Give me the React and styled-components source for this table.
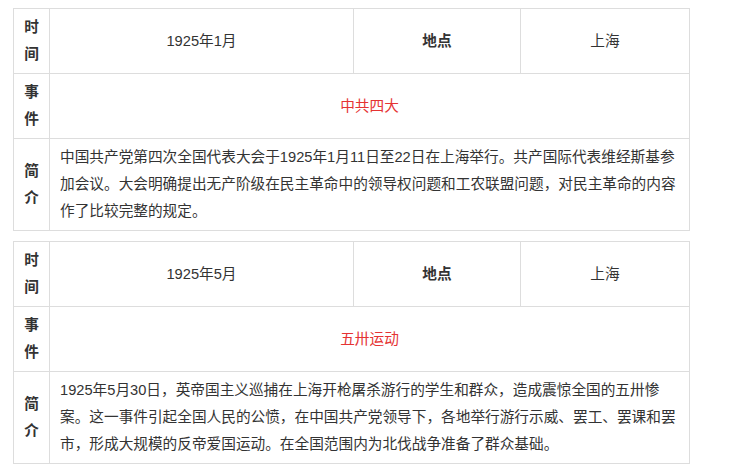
import styled, { createGlobalStyle } from 'styled-components';

const GlobalStyle = createGlobalStyle`
  body {
    margin: 0;
    background: #ffffff;
  }
`;

const Page = styled.div`
  padding: 8px 13px;
  font-family: "Liberation Sans", "Noto Sans CJK SC", sans-serif;
  font-size: 14.67px;
  color: #333333;
`;

const EventTable = styled.table`
  width: 677px;
  table-layout: fixed;
  border-collapse: collapse;
  margin-bottom: 10px;
`;

const Cell = styled.td`
  border: 1px solid #dddddd;
  padding: 5px 10px;
  line-height: 27px;
  vertical-align: middle;
  text-align: ${(p) => (p.$left ? 'left' : 'center')};
  font-weight: ${(p) => (p.$bold ? 'bold' : 'normal')};
  color: ${(p) => (p.$red ? '#e53333' : '#333333')};
  word-break: normal;
`;

const events = [
  {
    date: '1925年1月',
    place: '上海',
    title: '中共四大',
    summary:
      '中国共产党第四次全国代表大会于1925年1月11日至22日在上海举行。共产国际代表维经斯基参加会议。大会明确提出无产阶级在民主革命中的领导权问题和工农联盟问题，对民主革命的内容作了比较完整的规定。',
  },
  {
    date: '1925年5月',
    place: '上海',
    title: '五卅运动',
    summary:
      '1925年5月30日，英帝国主义巡捕在上海开枪屠杀游行的学生和群众，造成震惊全国的五卅惨案。这一事件引起全国人民的公愤，在中国共产党领导下，各地举行游行示威、罢工、罢课和罢市，形成大规模的反帝爱国运动。在全国范围内为北伐战争准备了群众基础。',
  },
];

const EventCard = ({ event }) => (
  <EventTable>
    <colgroup>
      <col style={{ width: 36 }} />
      <col style={{ width: 304 }} />
      <col style={{ width: 167 }} />
      <col style={{ width: 169 }} />
    </colgroup>
    <tbody>
      <tr>
        <Cell $bold>时间</Cell>
        <Cell>{event.date}</Cell>
        <Cell $bold>地点</Cell>
        <Cell>{event.place}</Cell>
      </tr>
      <tr>
        <Cell $bold>事件</Cell>
        <Cell colSpan={3} $red>
          {event.title}
        </Cell>
      </tr>
      <tr>
        <Cell $bold>简介</Cell>
        <Cell colSpan={3} $left>
          {event.summary}
        </Cell>
      </tr>
    </tbody>
  </EventTable>
);

export default function App() {
  return (
    <Page>
      <GlobalStyle />
      {events.map((e) => (
        <EventCard key={e.title} event={e} />
      ))}
    </Page>
  );
}
